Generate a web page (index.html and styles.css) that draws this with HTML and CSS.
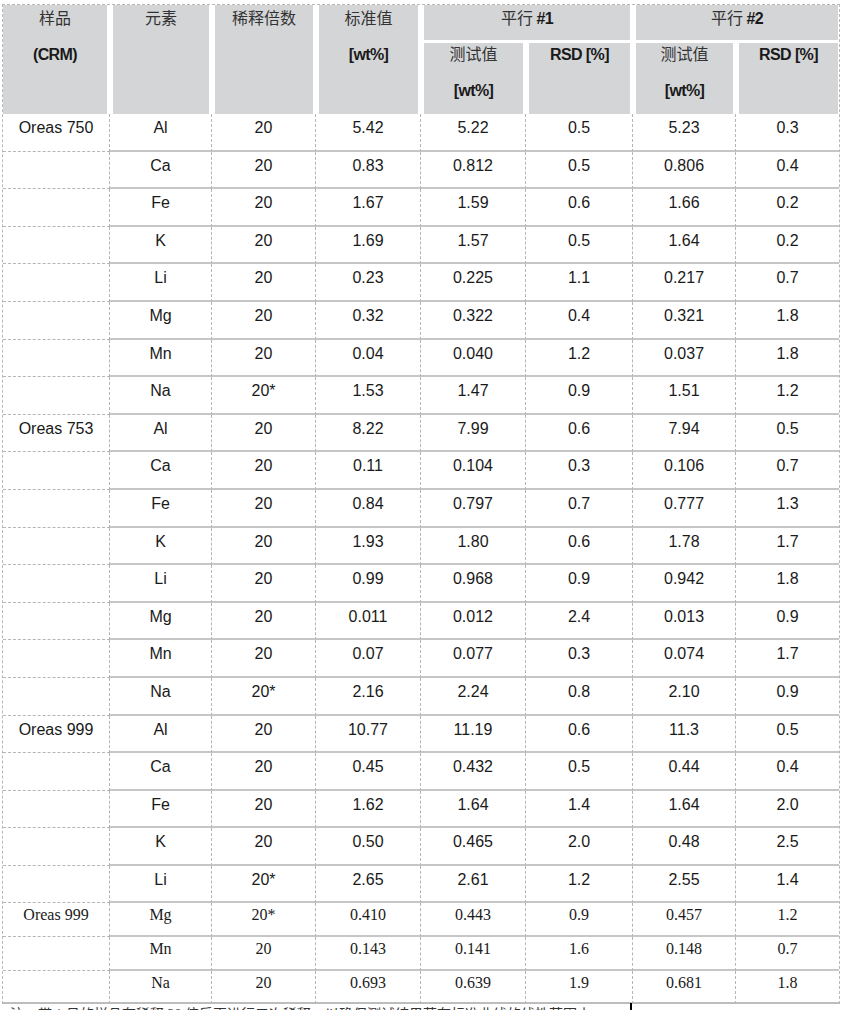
FILE: index.html
```html
<!DOCTYPE html>
<html lang="zh">
<head>
<meta charset="utf-8">
<title>CRM 测试结果</title>
<link rel="stylesheet" href="styles.css">
</head>
<body>
<div class="page">
<table class="tbl">
  <colgroup>
    <col class="w1"><col class="w2"><col class="w3"><col class="w4"><col class="w5"><col class="w6"><col class="w7"><col class="w8">
  </colgroup>
  <thead>
    <tr class="h1">
      <th rowspan="2" class="first">样品<span class="l2 b">(CRM)</span></th>
      <th rowspan="2">元素</th>
      <th rowspan="2">稀释倍数</th>
      <th rowspan="2">标准值<span class="l2 b">[wt%]</span></th>
      <th colspan="2" class="grp">平行 <b class="b">#1</b></th>
      <th colspan="2" class="grp last">平行 <b class="b">#2</b></th>
    </tr>
    <tr class="h2">
      <th class="sub">测试值<span class="l2 b">[wt%]</span></th>
      <th class="sub"><span class="b">RSD [%]</span></th>
      <th class="sub">测试值<span class="l2 b">[wt%]</span></th>
      <th class="sub last"><span class="b">RSD [%]</span></th>
    </tr>
  </thead>
  <tbody>
    <tr class="r"><td class="c1">Oreas 750</td><td>Al</td><td>20</td><td>5.42</td><td>5.22</td><td>0.5</td><td>5.23</td><td class="c8">0.3</td></tr>
    <tr class="r"><td class="c1"></td><td>Ca</td><td>20</td><td>0.83</td><td>0.812</td><td>0.5</td><td>0.806</td><td class="c8">0.4</td></tr>
    <tr class="r"><td class="c1"></td><td>Fe</td><td>20</td><td>1.67</td><td>1.59</td><td>0.6</td><td>1.66</td><td class="c8">0.2</td></tr>
    <tr class="r"><td class="c1"></td><td>K</td><td>20</td><td>1.69</td><td>1.57</td><td>0.5</td><td>1.64</td><td class="c8">0.2</td></tr>
    <tr class="r"><td class="c1"></td><td>Li</td><td>20</td><td>0.23</td><td>0.225</td><td>1.1</td><td>0.217</td><td class="c8">0.7</td></tr>
    <tr class="r"><td class="c1"></td><td>Mg</td><td>20</td><td>0.32</td><td>0.322</td><td>0.4</td><td>0.321</td><td class="c8">1.8</td></tr>
    <tr class="r"><td class="c1"></td><td>Mn</td><td>20</td><td>0.04</td><td>0.040</td><td>1.2</td><td>0.037</td><td class="c8">1.8</td></tr>
    <tr class="r"><td class="c1"></td><td>Na</td><td>20*</td><td>1.53</td><td>1.47</td><td>0.9</td><td>1.51</td><td class="c8">1.2</td></tr>
    <tr class="r"><td class="c1">Oreas 753</td><td>Al</td><td>20</td><td>8.22</td><td>7.99</td><td>0.6</td><td>7.94</td><td class="c8">0.5</td></tr>
    <tr class="r"><td class="c1"></td><td>Ca</td><td>20</td><td>0.11</td><td>0.104</td><td>0.3</td><td>0.106</td><td class="c8">0.7</td></tr>
    <tr class="r"><td class="c1"></td><td>Fe</td><td>20</td><td>0.84</td><td>0.797</td><td>0.7</td><td>0.777</td><td class="c8">1.3</td></tr>
    <tr class="r"><td class="c1"></td><td>K</td><td>20</td><td>1.93</td><td>1.80</td><td>0.6</td><td>1.78</td><td class="c8">1.7</td></tr>
    <tr class="r"><td class="c1"></td><td>Li</td><td>20</td><td>0.99</td><td>0.968</td><td>0.9</td><td>0.942</td><td class="c8">1.8</td></tr>
    <tr class="r"><td class="c1"></td><td>Mg</td><td>20</td><td>0.011</td><td>0.012</td><td>2.4</td><td>0.013</td><td class="c8">0.9</td></tr>
    <tr class="r"><td class="c1"></td><td>Mn</td><td>20</td><td>0.07</td><td>0.077</td><td>0.3</td><td>0.074</td><td class="c8">1.7</td></tr>
    <tr class="r"><td class="c1"></td><td>Na</td><td>20*</td><td>2.16</td><td>2.24</td><td>0.8</td><td>2.10</td><td class="c8">0.9</td></tr>
    <tr class="r"><td class="c1">Oreas 999</td><td>Al</td><td>20</td><td>10.77</td><td>11.19</td><td>0.6</td><td>11.3</td><td class="c8">0.5</td></tr>
    <tr class="r"><td class="c1"></td><td>Ca</td><td>20</td><td>0.45</td><td>0.432</td><td>0.5</td><td>0.44</td><td class="c8">0.4</td></tr>
    <tr class="r"><td class="c1"></td><td>Fe</td><td>20</td><td>1.62</td><td>1.64</td><td>1.4</td><td>1.64</td><td class="c8">2.0</td></tr>
    <tr class="r"><td class="c1"></td><td>K</td><td>20</td><td>0.50</td><td>0.465</td><td>2.0</td><td>0.48</td><td class="c8">2.5</td></tr>
    <tr class="r"><td class="c1"></td><td>Li</td><td>20*</td><td>2.65</td><td>2.61</td><td>1.2</td><td>2.55</td><td class="c8">1.4</td></tr>
    <tr class="rs"><td class="c1">Oreas 999</td><td>Mg</td><td>20*</td><td>0.410</td><td>0.443</td><td>0.9</td><td>0.457</td><td class="c8">1.2</td></tr>
    <tr class="rs"><td class="c1"></td><td>Mn</td><td>20</td><td>0.143</td><td>0.141</td><td>1.6</td><td>0.148</td><td class="c8">0.7</td></tr>
    <tr class="rs end"><td class="c1"></td><td>Na</td><td>20</td><td>0.693</td><td>0.639</td><td>1.9</td><td>0.681</td><td class="c8">1.8</td></tr>
  </tbody>
</table>
<div class="note"><span class="note-text">注：带 * 号的样品在稀释 20 倍后再进行二次稀释，以确保测试结果落在标准曲线的线性范围内。</span><span class="caret"></span></div>
</div>
</body>
</html>
```

FILE: styles.css
```css
html, body {
  margin: 0;
  padding: 0;
  background: #ffffff;
}

body {
  font-family: "Liberation Sans", "Noto Sans CJK SC", sans-serif;
  color: #1a1a1a;
}

.page {
  padding: 4px 0 0 2px;
}

.tbl {
  border-collapse: separate;
  border-spacing: 0;
  table-layout: fixed;
  width: 838px;
  border-top: 1px dashed #b8b8b8;
  border-left: 1px dashed #b8b8b8;
  border-right: 1px dashed #b8b8b8;
}

.w1 { width: 107px; }
.w2 { width: 102px; }
.w3 { width: 104px; }
.w4 { width: 105px; }
.w5 { width: 105px; }
.w6 { width: 107px; }
.w7 { width: 103px; }
.w8 { width: 103px; }

/* header */
.h1 { height: 38px; }
.h2 { height: 71px; }

.tbl th {
  background: #d4d5d7;
  background-clip: padding-box;
  border-left: 3px solid #ffffff;
  border-right: 3px solid #ffffff;
  padding: 2px 0 0;
  vertical-align: top;
  text-align: center;
  font-family: "Noto Sans CJK SC", "Liberation Sans", sans-serif;
  font-weight: 400;
  font-size: 16px;
  line-height: 20px;
  color: #333333;
}

.tbl th.first { border-left: 0; }
.tbl th.last { border-right: 1px solid #ffffff; }
.tbl th.grp { border-bottom: 3px solid #ffffff; }
.tbl th.sub { padding-top: 0; }

.l2 {
  display: block;
  margin-top: 18px;
}

.b {
  font-family: "Liberation Sans", sans-serif;
  font-weight: 700;
  letter-spacing: -0.6px;
  color: #1a1a1a;
}

/* body rows */
.r { height: 37.6px; }
.rs { height: 34px; }
.rs.end { height: 32.5px; }

.tbl td {
  padding: 4px 2px 0;
  vertical-align: top;
  text-align: center;
  font-size: 16px;
  line-height: 20px;
  white-space: nowrap;
  border-right: 1px dashed #b5b5b5;
  border-bottom: 2px solid #c6c6c6;
}

.tbl td.c1 {
  border-bottom: 1px dashed #b5b5b5;
}

.tbl td.c8 {
  border-right: 0;
}

.rs td {
  font-family: "Liberation Serif", serif;
  padding-top: 2px;
}

.tbl .end td,
.tbl .end td.c1 {
  border-bottom: 2px solid #bdbdbd;
}

/* cut-off note under the table */
.note {
  display: flex;
  align-items: flex-start;
  margin-top: 1px;
}

.note-text {
  width: 620px;
  padding-left: 8px;
  overflow: hidden;
  white-space: nowrap;
  font-family: "Liberation Serif", "Noto Sans CJK SC", serif;
  font-size: 14px;
  line-height: 20px;
  color: #333333;
}

.caret {
  display: block;
  width: 2px;
  height: 20px;
  margin-top: -2px;
  background: #000000;
}
```
